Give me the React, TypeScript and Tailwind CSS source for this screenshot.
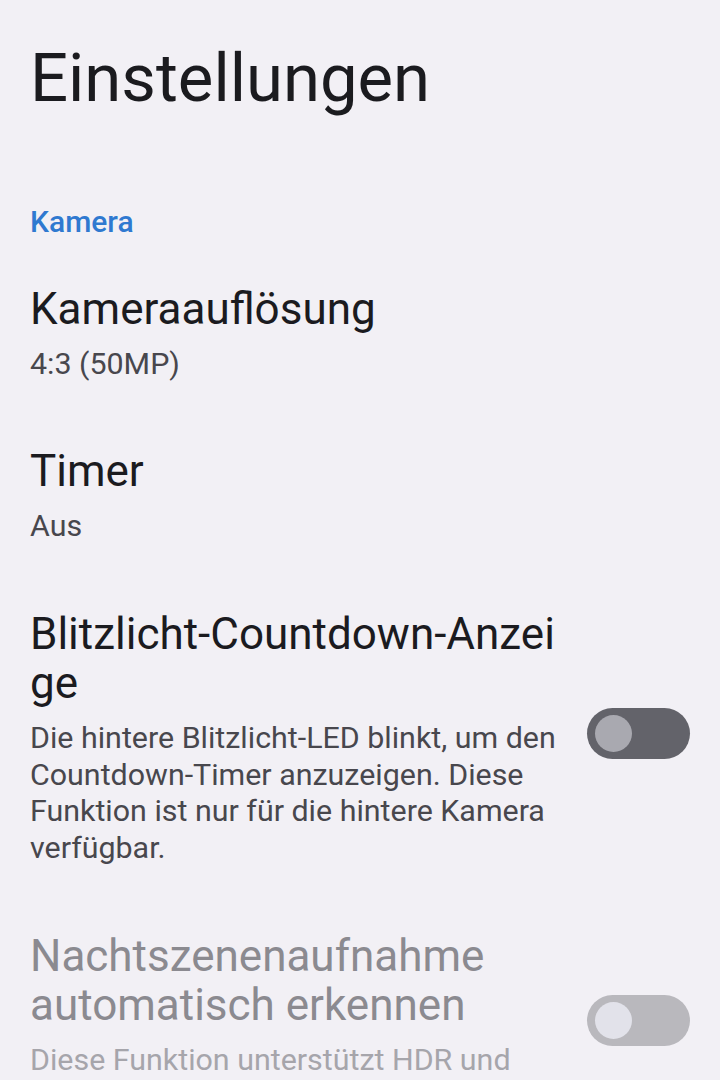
import React from "react";

const font = { fontFamily: "Roboto, 'Noto Sans', sans-serif" };

function Toggle({ disabled, className }: { disabled?: boolean; className?: string }) {
  return (
    <div
      className={`w-[103px] h-[51px] rounded-full flex items-center pl-[8px] shrink-0 self-start ${
        disabled ? "bg-[#b9b8bd]" : "bg-[#63636a]"
      } ${className ?? ""}`}
    >
      <div
        className={`w-[37px] h-[37px] rounded-full ${
          disabled ? "bg-[#e2e2ea]" : "bg-[#a9a9b0]"
        }`}
      />
    </div>
  );
}

function Lines({ lines }: { lines: string[] }) {
  return (
    <>
      {lines.map((l, i) => (
        <span key={i} className="block whitespace-nowrap">
          {l}
        </span>
      ))}
    </>
  );
}

export default function App() {
  return (
    <div
      className="w-[720px] h-[1080px] overflow-hidden bg-[#f2f0f5] px-[30px] pt-[45px]"
      style={font}
    >
      <h1 className="text-[67px] leading-[67px] font-normal text-[#1b1b1f]">
        Einstellungen
      </h1>

      <div className="mt-[95px] text-[30px] leading-[30px] font-medium text-[#2f79d0]">
        Kamera
      </div>

      <div className="mt-[15px] flex flex-col">
        <div className="py-[32.5px]">
          <div className="text-[44px] leading-[49px] text-[#1b1b1f] whitespace-nowrap">Kameraauflösung</div>
          <div className="mt-[12px] text-[30.4px] leading-[36.7px] text-[#48474d]">4:3 (50MP)</div>
        </div>

        <div className="py-[32.5px]">
          <div className="text-[44px] leading-[49px] text-[#1b1b1f]">Timer</div>
          <div className="mt-[12px] text-[30.4px] leading-[36.7px] text-[#48474d]">Aus</div>
        </div>

        <div className="py-[32.5px] flex">
          <div className="flex-1 pr-[30px]">
            <div className="text-[44px] leading-[49px] text-[#1b1b1f]">
              <Lines lines={["Blitzlicht-Countdown-Anzei", "ge"]} />
            </div>
            <div className="mt-[12px] text-[30.4px] leading-[36.7px] text-[#48474d]">
              <Lines
                lines={[
                  "Die hintere Blitzlicht-LED blinkt, um den",
                  "Countdown-Timer anzuzeigen. Diese",
                  "Funktion ist nur für die hintere Kamera",
                  "verfügbar.",
                ]}
              />
            </div>
          </div>
          <Toggle className="mt-[98px]" />
        </div>

        <div className="py-[32.5px] flex">
          <div className="flex-1 pr-[30px]">
            <div className="text-[44px] leading-[49px] text-[#8b8a90]">
              <Lines lines={["Nachtszenenaufnahme", "automatisch erkennen"]} />
            </div>
            <div className="mt-[12px] text-[30.4px] leading-[36.7px] text-[#a6a5ab]">
              <Lines lines={["Diese Funktion unterstützt HDR und", "Nachtmodus."]} />
            </div>
          </div>
          <Toggle disabled className="mt-[63px]" />
        </div>
      </div>
    </div>
  );
}
